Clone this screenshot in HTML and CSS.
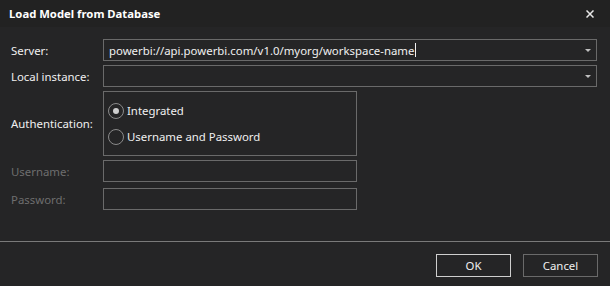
FILE: index.html
```html
<!DOCTYPE html>
<html lang="en">
  <head>
    <meta charset="UTF-8" />
    <title>Load Model from Database</title>
    <link rel="stylesheet" href="styles.css">
  </head>
  <body>
    <div class="dialog">
      <div class="titlebar">
        <span class="title">Load Model from Database</span>
        <svg class="close" width="8" height="8" viewBox="0 0 8 8">
          <path d="M0.5 0.5 L7.5 7.5 M7.5 0.5 L0.5 7.5" stroke="#e8e8e8" stroke-width="1.5" />
        </svg>
      </div>

      <div class="form">
        <label class="label">Server:</label>
        <div class="combo">
          <span class="value">powerbi://api.powerbi.com/v1.0/myorg/workspace-name<span class="caret"></span></span>
          <span class="arrow"></span>
        </div>

        <label class="label">Local instance:</label>
        <div class="combo">
          <span class="value"></span>
          <span class="arrow"></span>
        </div>

        <label class="label">Authentication:</label>
        <div class="group">
          <div class="radio checked"><span class="circle"></span>Integrated</div>
          <div class="radio"><span class="circle"></span>Username and Password</div>
        </div>

        <label class="label disabled">Username:</label>
        <div class="textbox"></div>

        <label class="label disabled pw">Password:</label>
        <div class="textbox pw"></div>
      </div>

      <div class="footer">
        <button class="btn default">OK</button>
        <button class="btn">Cancel</button>
      </div>
    </div>
  </body>
</html>
```

FILE: styles.css
```css
body {
  margin: 0;
  padding: 0;
  background-color: #252526;
  font-family: "Noto Sans", "Open Sans", sans-serif;
  font-size: 11.4px;
  color: #f0f0f0;
}
.dialog {
  width: 610px;
  height: 286px;
  display: flex;
  flex-direction: column;
  background-color: #252526;
}
.titlebar {
  height: 27px;
  display: flex;
  align-items: center;
  justify-content: space-between;
  padding: 0 16px 0 9px;
  background-color: #222222;
}
.title {
  font-weight: bold;
  font-size: 11.3px;
  color: #ffffff;
}
.form {
  flex: 1;
  display: grid;
  grid-template-columns: 92px 1fr;
  align-content: start;
  align-items: center;
  row-gap: 4px;
  padding: 12px 13px 0 11px;
}
.label.disabled {
  color: #6e6e6e;
}
.combo {
  height: 20px;
  border: 1px solid #6a6a6a;
  display: flex;
  align-items: center;
  justify-content: space-between;
  padding: 0 5px 0 5px;
}
.value {
  display: flex;
  align-items: center;
  white-space: nowrap;
}
.caret {
  display: inline-block;
  width: 1px;
  height: 14px;
  margin-left: 1px;
  background-color: #f0f0f0;
}
.arrow {
  width: 0;
  height: 0;
  margin-top: 1px;
  border-left: 3px solid transparent;
  border-right: 3px solid transparent;
  border-top: 3px solid #c0c0c0;
}
.group {
  width: 248px;
  height: 63px;
  border: 1px solid #6a6a6a;
  display: flex;
  flex-direction: column;
  justify-content: center;
  gap: 8px;
  padding-left: 4px;
  box-sizing: content-box;
}
.radio {
  display: flex;
  align-items: center;
  gap: 3px;
  height: 18px;
}
.circle {
  width: 14px;
  height: 14px;
  border: 1px solid #8a8a8a;
  border-radius: 50%;
  display: flex;
  align-items: center;
  justify-content: center;
}
.radio.checked .circle::after {
  content: "";
  width: 6px;
  height: 6px;
  border-radius: 50%;
  background-color: #cfcfcf;
}
.textbox {
  width: 252px;
  height: 20px;
  border: 1px solid #6a6a6a;
}
.pw {
  margin-top: 2px;
}
.footer {
  border-top: 1px solid #7a7a7a;
  display: flex;
  justify-content: flex-end;
  gap: 12px;
  padding: 12px 12px 9px 0;
}
.btn {
  width: 75px;
  height: 23px;
  background-color: #252526;
  border: 1px solid #6a6a6a;
  color: #f0f0f0;
  font-family: "Noto Sans", "Open Sans", sans-serif;
  font-size: 11.4px;
  padding: 0;
}
.btn.default {
  border-color: #cfcfcf;
}
```
